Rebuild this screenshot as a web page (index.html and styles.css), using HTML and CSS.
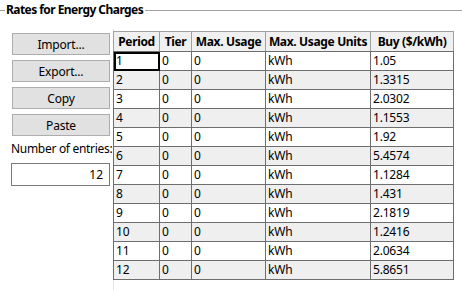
FILE: index.html
```html
<!DOCTYPE html>
<html>
<head>
<meta charset="utf-8">
<link rel="stylesheet" href="styles.css">
</head>
<body>
<div class="group">
  <div class="group-title"><span class="line short"></span><span class="title">Rates for Energy Charges</span><span class="line long"></span></div>
  <div class="content">
    <div class="side">
      <button class="btn">Import...</button>
      <button class="btn">Export...</button>
      <button class="btn">Copy</button>
      <button class="btn">Paste</button>
      <div class="label">Number of entries:</div>
      <div class="entry">12</div>
    </div>
    <div class="grid">
      <table>
        <colgroup>
          <col class="c1"><col class="c2"><col class="c3"><col class="c4"><col class="c5">
        </colgroup>
        <thead>
          <tr><th>Period</th><th>Tier</th><th>Max. Usage</th><th>Max. Usage Units</th><th>Buy ($/kWh)</th></tr>
        </thead>
        <tbody>
          <tr><td class="sel">1</td><td>0</td><td>0</td><td>kWh</td><td>1.05</td></tr>
          <tr><td>2</td><td>0</td><td>0</td><td>kWh</td><td>1.3315</td></tr>
          <tr><td>3</td><td>0</td><td>0</td><td>kWh</td><td>2.0302</td></tr>
          <tr><td>4</td><td>0</td><td>0</td><td>kWh</td><td>1.1553</td></tr>
          <tr><td>5</td><td>0</td><td>0</td><td>kWh</td><td>1.92</td></tr>
          <tr><td>6</td><td>0</td><td>0</td><td>kWh</td><td>5.4574</td></tr>
          <tr><td>7</td><td>0</td><td>0</td><td>kWh</td><td>1.1284</td></tr>
          <tr><td>8</td><td>0</td><td>0</td><td>kWh</td><td>1.431</td></tr>
          <tr><td>9</td><td>0</td><td>0</td><td>kWh</td><td>2.1819</td></tr>
          <tr><td>10</td><td>0</td><td>0</td><td>kWh</td><td>1.2416</td></tr>
          <tr><td>11</td><td>0</td><td>0</td><td>kWh</td><td>2.0634</td></tr>
          <tr><td>12</td><td>0</td><td>0</td><td>kWh</td><td>5.8651</td></tr>
        </tbody>
      </table>
    </div>
  </div>
</div>
</body>
</html>
```

FILE: styles.css
```css
html, body {
  margin: 0;
  padding: 0;
  background: #ffffff;
  width: 462px;
  height: 290px;
  overflow: hidden;
}
body {
  font-family: "Noto Sans", "DejaVu Sans", sans-serif;
  font-size: 12px;
  color: #000;
}
.group-title {
  display: flex;
  align-items: center;
  height: 20px;
}
.line {
  height: 1px;
  background: #a0a0a0;
}
.line.short { width: 5px; }
.line.long { flex: 1; margin-left: 2px; }
.title {
  font-weight: bold;
  padding-left: 1px;
  letter-spacing: -0.55px;
  line-height: 20px;
}
.content {
  display: flex;
  margin-top: 9px;
}
.side {
  width: 99px;
  margin-left: 11px;
  padding-top: 4px;
  display: flex;
  flex-direction: column;
}
.btn {
  width: 98px;
  height: 22px;
  margin: 0 0 5px 1px;
  padding: 0;
  border: 1px solid #adadad;
  background: #e1e1e1;
  font-family: inherit;
  font-size: 12px;
  color: #000;
  letter-spacing: -0.2px;
}
.label {
  margin-top: 0;
  line-height: 16px;
  letter-spacing: -0.3px;
  white-space: nowrap;
}
.entry {
  margin-top: 6px;
  height: 21px;
  border: 1px solid #7a7a7a;
  text-align: right;
  padding-right: 6px;
  line-height: 21px;
}
.grid {
  margin-left: 3px;
  flex: 1;
  height: 261px;
  border-left: 1px solid #e6e6e6;
  padding-top: 2px;
}
table {
  border-collapse: collapse;
  table-layout: fixed;
  width: 341px;
  margin-left: -1px;
}
col.c1 { width: 46px; }
col.c2 { width: 32px; }
col.c3 { width: 74px; }
col.c4 { width: 105px; }
col.c5 { width: 83px; }
th, td {
  border: 1px solid #6e6e6e;
  height: 18px;
  padding: 0 0 0 2px;
  white-space: nowrap;
  overflow: hidden;
  line-height: 18px;
  text-align: left;
  letter-spacing: -0.2px;
}
th {
  height: 19px;
  background: #f0f0f0;
  font-weight: bold;
  text-align: center;
  padding: 0;
  letter-spacing: -0.35px;
  border-color: #a0a0a0 #a0a0a0 #6e6e6e #a0a0a0;
}
tbody tr:nth-child(even) td {
  background: #efefef;
}
td.sel {
  outline: 2px solid #000;
  outline-offset: -2px;
}
```
